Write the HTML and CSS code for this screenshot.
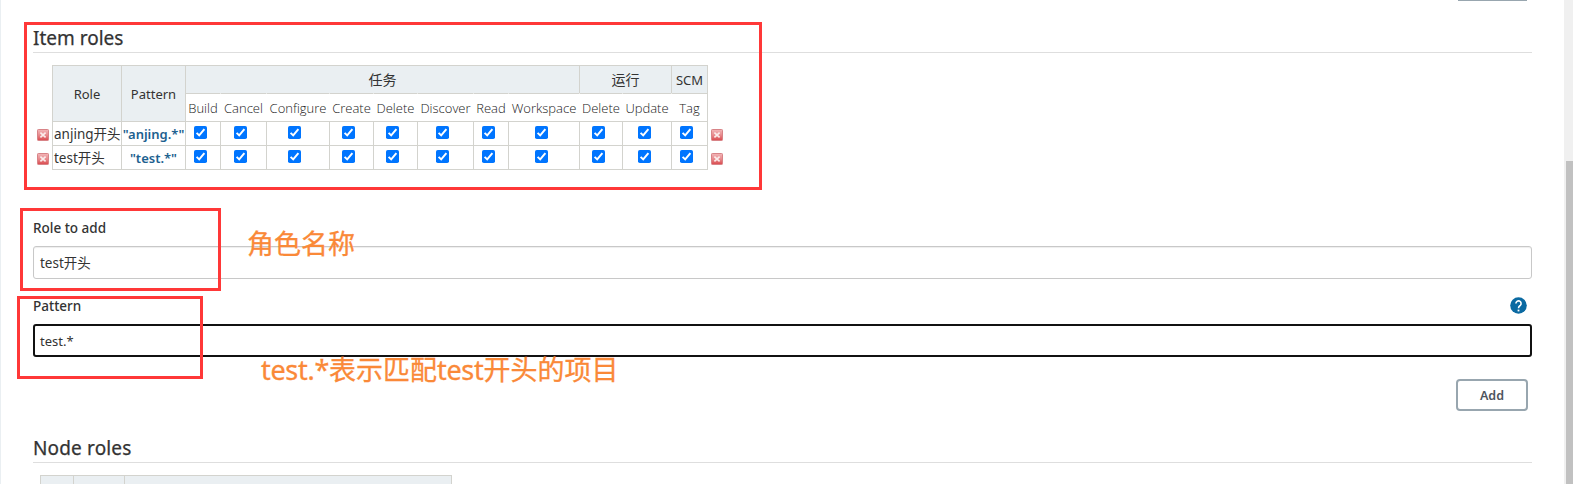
FILE: index.html
```html
<!DOCTYPE html>
<html lang="zh-CN">
<head>
<meta charset="utf-8">
<title>Manage Roles</title>
<link rel="stylesheet" href="styles.css">
</head>
<body>
<svg class="defs" width="0" height="0">
  <defs>
    <linearGradient id="red" x1="0" y1="0" x2="0" y2="1">
      <stop offset="0" stop-color="#f2b6b8"/>
      <stop offset=".5" stop-color="#e88b8e"/>
      <stop offset="1" stop-color="#d9484c"/>
    </linearGradient>
    <symbol id="remove" viewBox="0 0 12 12">
      <rect x=".5" y=".5" width="11" height="11" rx=".8" fill="url(#red)" stroke="#d88387"/>
      <path d="M3.400 3.700 8.600 8.300M8.600 3.700 3.400 8.300" stroke="#fbeceb" stroke-width="1.700"/>
    </symbol>
    <symbol id="check" viewBox="0 0 13 13">
      <rect width="13" height="13" rx="1.8" fill="#0075ff"/>
      <path d="M2.6 6.9 5.2 9.4 10.4 3.2" fill="none" stroke="#fff" stroke-width="2"/>
    </symbol>
  </defs>
</svg>
<div class="page">
  <main class="content">
    <div class="toolbar"><span class="button-edge"></span></div>
    <h2 class="title">Item roles</h2>
    <div class="matrix">
      <div class="removers">
        <svg class="remove"><use href="#remove"/></svg>
        <svg class="remove"><use href="#remove"/></svg>
      </div>
      <div class="grid">
        <div class="head tall">Role</div><div class="head tall">Pattern</div>
        <div class="head jobs">任务</div><div class="head runs">运行</div><div class="head"><span class="scm">SCM</span></div>
        <div class="sub first"><span>Build</span></div><div class="sub"><span>Cancel</span></div><div class="sub"><span>Configure</span></div><div class="sub"><span>Create</span></div><div class="sub"><span>Delete</span></div><div class="sub"><span>Discover</span></div><div class="sub"><span>Read</span></div><div class="sub"><span>Workspace</span></div><div class="sub"><span>Delete</span></div><div class="sub"><span>Update</span></div><div class="sub"><span>Tag</span></div>
        <div class="role">anjing开头</div><div class="pattern">"anjing.*"</div>
        <div class="box"><svg><use href="#check"/></svg></div><div class="box"><svg><use href="#check"/></svg></div><div class="box wide"><svg><use href="#check"/></svg></div><div class="box"><svg><use href="#check"/></svg></div><div class="box"><svg><use href="#check"/></svg></div><div class="box"><svg><use href="#check"/></svg></div><div class="box"><svg><use href="#check"/></svg></div><div class="box"><svg><use href="#check"/></svg></div><div class="box"><svg><use href="#check"/></svg></div><div class="box"><svg><use href="#check"/></svg></div><div class="box"><svg><use href="#check"/></svg></div>
        <div class="role">test开头</div><div class="pattern">"test.*"</div>
        <div class="box"><svg><use href="#check"/></svg></div><div class="box"><svg><use href="#check"/></svg></div><div class="box wide"><svg><use href="#check"/></svg></div><div class="box"><svg><use href="#check"/></svg></div><div class="box"><svg><use href="#check"/></svg></div><div class="box"><svg><use href="#check"/></svg></div><div class="box"><svg><use href="#check"/></svg></div><div class="box"><svg><use href="#check"/></svg></div><div class="box"><svg><use href="#check"/></svg></div><div class="box"><svg><use href="#check"/></svg></div><div class="box"><svg><use href="#check"/></svg></div>
      </div>
      <div class="removers">
        <svg class="remove"><use href="#remove"/></svg>
        <svg class="remove"><use href="#remove"/></svg>
      </div>
    </div>
    <div class="label">Role to add</div>
    <div class="input">test开头</div>
    <div class="label second"><span>Pattern</span>
      <svg class="help" viewBox="0 0 17 17"><circle cx="8.5" cy="8.5" r="8.3" fill="#0b6aa2"/><path d="M5.9 6.5a2.6 2.6 0 1 1 4.5 1.8C9.4 9.200 8.500 9.600 8.500 11.200" fill="none" stroke="#fff" stroke-width="1.600"/><rect x="7.600" y="12.600" width="1.800" height="1.800" fill="#fff"/></svg>
    </div>
    <div class="input focused">test.*</div>
    <div class="actions"><button class="add">Add</button></div>
    <h2 class="title node">Node roles</h2>
    <div class="node-grid"><div></div><div></div><div></div></div>
  </main>
  <div class="scrollbar"><div class="thumb"></div></div>
  <div class="mark mark-table"></div>
  <div class="mark mark-role"></div>
  <div class="mark mark-pattern"></div>
  <div class="note note-role">角色名称</div>
  <div class="note note-pattern"><span class="latin">test.*</span>表示匹配<span class="latin">test</span>开头的项目</div>
</div>
</body>
</html>
```
FILE: styles.css
```css
* { box-sizing: border-box; }
body {
  margin: 0;
  overflow: hidden;
  background: #fff;
  color: #333;
  font: 14px/20px "Noto Sans", "Noto Sans CJK SC", sans-serif;
}
.defs { position: absolute; }
.page { position: relative; display: flex; height: 484px; overflow: hidden; }
.content {
  flex: 1;
  border-left: 1px solid #eaeff2;
  padding: 0 32px;
}
.toolbar { display: flex; justify-content: flex-end; height: 24px; padding-right: 5px; }
.button-edge { width: 69px; height: 1px; background: #98a6af; }
.title {
  height: 29px;
  margin: 0;
  border-bottom: 1px solid #dedede;
  font-size: 19px;
  font-weight: 400;
  line-height: 29px;
  -webkit-text-stroke: .25px #333;
}
.matrix { display: flex; margin-top: 12px; padding-left: 4px; }
.removers { display: flex; flex-direction: column; gap: 12px; padding-top: 64px; }
.remove { display: block; width: 12px; height: 12px; }
.grid {
  display: grid;
  grid-template-columns: 69px 64px 35px 46px 63px 44px 44px 56px 35px 71px 43px 49px 36px;
  grid-template-rows: 28px 28px 24px 24px;
  margin: 0 3px;
  border: solid #d3d3ce;
  border-width: 0 1px 1px 0;
}
.grid > div {
  border: solid #d3d3ce;
  border-width: 1px 0 0 1px;
  white-space: nowrap;
  min-width: 0;
}
.grid > .head {
  display: flex;
  align-items: center;
  justify-content: center;
  background: #eaeff2;
  font-size: 13px;
}
.grid > .tall { grid-row: span 2; padding-top: 1px; }
.grid > .jobs { grid-column: span 8; }
.grid > .runs { grid-column: span 2; }
.grid > .jobs, .grid > .runs { font-size: 14px; }
.grid > .sub {
  display: flex;
  justify-content: center;
  border-left-color: transparent;
  color: #222;
  font-family: "Open Sans", sans-serif;
  font-size: 13px;
  font-weight: 300;
  line-height: 28px;
}
.grid > .first { border-left-color: #d3d3ce; }
.role { padding-left: 1px; font-size: 13.500px; line-height: 24px; }
.pattern { color: #1d618f; font-size: 13px; font-weight: 600; line-height: 24px; text-align: center; }
.box { display: flex; justify-content: center; padding: 4px 6px 0 0; }
.box svg { flex: none; width: 13px; height: 13px; }
.grid > .wide { padding-right: 7px; }
.label {
  display: flex;
  justify-content: space-between;
  height: 20px;
  margin-top: 48px;
  padding-right: 5px;
  font-size: 13.500px;
  font-weight: 500;
}
.second { margin-top: 17px; }
.help { width: 17px; height: 17px; margin-top: .5px; }
.input {
  height: 33px;
  margin-top: 8px;
  padding-left: 6px;
  border: 1px solid #c8c8c8;
  border-radius: 3px;
  font-size: 13.500px;
  line-height: 32px;
  box-shadow: inset 0 1px 1px #eee;
}
.focused { border: 2px solid #111; padding-left: 5px; font-size: 13px; line-height: 31px; box-shadow: none; }
.actions { display: flex; justify-content: flex-end; padding: 22px 4px 0 0; }
.add {
  width: 72px;
  height: 32px;
  padding: 1px 0 0;
  border: 2px solid #98a6af;
  border-radius: 4px;
  background: #fff;
  color: #4d545d;
  font: 600 12.500px/27px "Noto Sans", sans-serif;
}
.node { margin-top: 23px; letter-spacing: .15px; }
.node-grid {
  display: grid;
  grid-template-columns: 33px 51px 327px;
  width: 412px;
  height: 9px;
  margin: 12px 0 0 7px;
  border-right: 1px solid #d3d3ce;
}
.node-grid div { border: solid #d3d3ce; border-width: 1px 0 0 1px; background: #eaeff2; }
.scrollbar { width: 9px; padding: 161px 0 0 2px; background: #f0f0f0; }
.thumb { height: 323px; background: #c1c1c1; }

/* Annotations drawn over the page */
.mark { position: absolute; border: 3px solid #ff3838; }
.mark-table { left: 24px; top: 22px; width: 738px; height: 168px; }
.mark-role { left: 20px; top: 208px; width: 201px; height: 83px; }
.mark-pattern { left: 17px; top: 296px; width: 186px; height: 83px; }
.note {
  position: absolute;
  color: #fa8938;
  font-size: 27px;
  line-height: 36px;
  white-space: nowrap;
  -webkit-text-stroke: .3px #fa8938;
}
.latin { letter-spacing: -.3px; }
.note-role { left: 247px; top: 226px; }
.note-pattern { left: 261px; top: 352px; }
```
